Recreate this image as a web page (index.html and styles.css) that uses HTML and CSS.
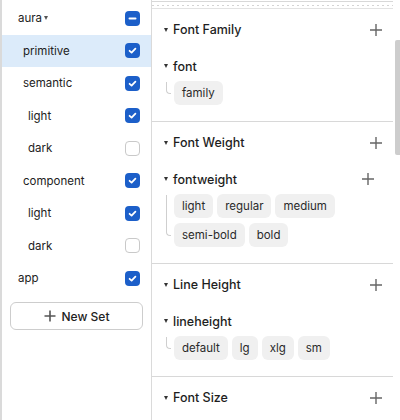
FILE: index.html
```html
<!DOCTYPE html>
<html>
<head>
<meta charset="utf-8">
<link rel="stylesheet" href="styles.css">
</head>
<body>
<div class="app">
  <aside class="sets">
    <div class="set-row lvl0"><span class="set-name">aura<span class="mini-caret"></span></span><span class="cb cb-on"><svg viewBox="0 0 15 15" width="15" height="15"><path d="M4.5 7.5h6" stroke="#fff" stroke-width="2" stroke-linecap="round"/></svg></span></div>
    <div class="set-row lvl1 active"><span class="set-name">primitive</span><span class="cb cb-on"><svg viewBox="0 0 15 15" width="15" height="15"><path d="M4.6 7.8l2 1.8 3.8-4" fill="none" stroke="#fff" stroke-width="1.8" stroke-linecap="round" stroke-linejoin="round"/></svg></span></div>
    <div class="set-row lvl1"><span class="set-name">semantic</span><span class="cb cb-on"><svg viewBox="0 0 15 15" width="15" height="15"><path d="M4.6 7.8l2 1.8 3.8-4" fill="none" stroke="#fff" stroke-width="1.8" stroke-linecap="round" stroke-linejoin="round"/></svg></span></div>
    <div class="set-row lvl2"><span class="set-name">light</span><span class="cb cb-on"><svg viewBox="0 0 15 15" width="15" height="15"><path d="M4.6 7.8l2 1.8 3.8-4" fill="none" stroke="#fff" stroke-width="1.8" stroke-linecap="round" stroke-linejoin="round"/></svg></span></div>
    <div class="set-row lvl2"><span class="set-name">dark</span><span class="cb cb-off"></span></div>
    <div class="set-row lvl1"><span class="set-name">component</span><span class="cb cb-on"><svg viewBox="0 0 15 15" width="15" height="15"><path d="M4.6 7.8l2 1.8 3.8-4" fill="none" stroke="#fff" stroke-width="1.8" stroke-linecap="round" stroke-linejoin="round"/></svg></span></div>
    <div class="set-row lvl2"><span class="set-name">light</span><span class="cb cb-on"><svg viewBox="0 0 15 15" width="15" height="15"><path d="M4.6 7.8l2 1.8 3.8-4" fill="none" stroke="#fff" stroke-width="1.8" stroke-linecap="round" stroke-linejoin="round"/></svg></span></div>
    <div class="set-row lvl2"><span class="set-name">dark</span><span class="cb cb-off"></span></div>
    <div class="set-row lvl0"><span class="set-name">app</span><span class="cb cb-on"><svg viewBox="0 0 15 15" width="15" height="15"><path d="M4.6 7.8l2 1.8 3.8-4" fill="none" stroke="#fff" stroke-width="1.8" stroke-linecap="round" stroke-linejoin="round"/></svg></span></div>
    <button class="new-set"><svg viewBox="0 0 12 12" width="12" height="12"><path d="M6 0.5v11M0.5 6h11" stroke="#555" stroke-width="1.6"/></svg>New Set</button>
  </aside>
  <main class="tokens">
    <div class="top-strip"></div>

    <section class="group">
      <div class="group-head"><span class="caret"></span><span class="group-title">Font Family</span><svg class="plus" viewBox="0 0 12 12" width="12" height="12"><path d="M6 0v12M0 6h12" stroke="#666" stroke-width="1.4"/></svg></div>
      <div class="sub">
        <div class="sub-head"><span class="caret"></span><span class="sub-title">font</span></div>
        <div class="sub-body"><span class="connector"></span><div class="chips"><span class="chip">family</span></div></div>
      </div>
    </section>

    <section class="group">
      <div class="group-head"><span class="caret"></span><span class="group-title">Font Weight</span><svg class="plus" viewBox="0 0 12 12" width="12" height="12"><path d="M6 0v12M0 6h12" stroke="#666" stroke-width="1.4"/></svg></div>
      <div class="sub">
        <div class="sub-head"><span class="caret"></span><span class="sub-title">fontweight</span><svg class="plus sub-plus" viewBox="0 0 12 12" width="12" height="12"><path d="M6 0v12M0 6h12" stroke="#666" stroke-width="1.4"/></svg></div>
        <div class="sub-body"><span class="connector"></span><div class="chips"><span class="chip">light</span><span class="chip">regular</span><span class="chip">medium</span><span class="chip">semi-bold</span><span class="chip">bold</span></div></div>
      </div>
    </section>

    <section class="group">
      <div class="group-head"><span class="caret"></span><span class="group-title">Line Height</span><svg class="plus" viewBox="0 0 12 12" width="12" height="12"><path d="M6 0v12M0 6h12" stroke="#666" stroke-width="1.4"/></svg></div>
      <div class="sub">
        <div class="sub-head"><span class="caret"></span><span class="sub-title">lineheight</span></div>
        <div class="sub-body"><span class="connector"></span><div class="chips"><span class="chip">default</span><span class="chip">lg</span><span class="chip">xlg</span><span class="chip">sm</span></div></div>
      </div>
    </section>

    <section class="group">
      <div class="group-head"><span class="caret"></span><span class="group-title">Font Size</span><svg class="plus" viewBox="0 0 12 12" width="12" height="12"><path d="M6 0v12M0 6h12" stroke="#666" stroke-width="1.4"/></svg></div>
    </section>

    <div class="scrollbar"></div>
  </main>
</div>
</body>
</html>
```

FILE: styles.css
```css
* { box-sizing: border-box; }
html, body { margin: 0; padding: 0; background: #fff; }
body {
  font-family: Inter, "Noto Sans", sans-serif;
  color: #222;
  -webkit-font-smoothing: antialiased;
}
.app {
  display: flex;
  width: 400px;
  height: 420px;
  overflow: hidden;
}

/* left: sets */
.sets {
  width: 152px;
  flex: none;
  border-left: 2px solid #dadada;
  border-right: 1px solid #dadada;
  padding-top: 2px;
  display: flex;
  flex-direction: column;
}
.set-row {
  height: 32.5px;
  display: flex;
  align-items: center;
  justify-content: space-between;
  padding-right: 11px;
  font-size: 11.5px;
  color: #222;
}
.set-row.lvl0 { padding-left: 16px; }
.set-row.lvl1 { padding-left: 21px; }
.set-row.lvl2 { padding-left: 26px; }
.set-row.active { background: #dcebfa; }
.set-name { display: flex; align-items: center; }
.mini-caret {
  width: 0; height: 0;
  margin-left: 2px;
  border-left: 2.5px solid transparent;
  border-right: 2.5px solid transparent;
  border-top: 4px solid #555;
}
.cb {
  width: 15px;
  height: 15px;
  border-radius: 4px;
  display: flex;
  align-items: center;
  justify-content: center;
  flex: none;
}
.cb svg { display: block; }
.cb-on { background: #1c5fc9; }
.cb-off { background: #fff; border: 1px solid #c9c9c9; }

.new-set {
  margin: 7.5px 8px 0 8px;
  height: 28px;
  border: 1px solid #cdcdcd;
  border-radius: 6px;
  background: #fff;
  display: flex;
  align-items: center;
  justify-content: center;
  gap: 6px;
  font-family: Inter, "Noto Sans", sans-serif;
  font-size: 12px;
  font-weight: 500;
  color: #222;
  padding: 0;
}
.new-set svg { display: block; }

/* right: tokens */
.tokens {
  flex: 1;
  position: relative;
  padding-right: 7px;
  overflow: hidden;
}
.top-strip {
  margin-top: 1px;
  height: 8px;
  border-top: 1px solid #d8d8d8;
  border-bottom: 1px solid #e2e2e2;
  background-image: repeating-linear-gradient(90deg, #d4d4d4 0 2px, transparent 2px 5px);
  background-size: 100% 1px;
  background-position: 0 3px;
  background-repeat: no-repeat;
}
.group {
  border-bottom: 1px solid #d8d8d8;
  padding-bottom: 16px;
}
.group-head {
  height: 41px;
  display: flex;
  align-items: center;
  padding: 0 11px 0 12px;
}
.caret {
  width: 0; height: 0;
  flex: none;
  border-left: 2.5px solid transparent;
  border-right: 2.5px solid transparent;
  border-top: 4px solid #333;
  margin-right: 5px;
}
.group-title {
  font-size: 12.5px;
  font-weight: 500;
  color: #1e1e1e;
  flex: 1;
}
.plus { display: block; flex: none; }
.sub { margin-top: 6px; }
.sub-head {
  height: 20px;
  display: flex;
  align-items: center;
  padding: 0 19px 0 12px;
}
.sub-title {
  font-size: 12.5px;
  font-weight: 500;
  color: #1e1e1e;
  flex: 1;
}
.sub-body {
  margin-top: 5px;
  display: flex;
}
.connector {
  flex: none;
  width: 5px;
  margin: 1px 3px 11px 14px;
  border-left: 1px solid #cfcfcf;
  border-bottom: 1px solid #cfcfcf;
  border-bottom-left-radius: 4px;
}
.chips {
  display: flex;
  flex-wrap: wrap;
  gap: 5px 4px;
  flex: 1;
}
.chip {
  height: 24px;
  padding: 0 8px;
  display: flex;
  align-items: center;
  background: #f0f0f0;
  border-radius: 6px;
  font-size: 11.5px;
  color: #2a2a2a;
}
.scrollbar {
  position: absolute;
  right: 0;
  top: 40px;
  width: 5px;
  height: 115px;
  background: #cdcdcd;
  border-radius: 2px 0 0 2px;
}
```
